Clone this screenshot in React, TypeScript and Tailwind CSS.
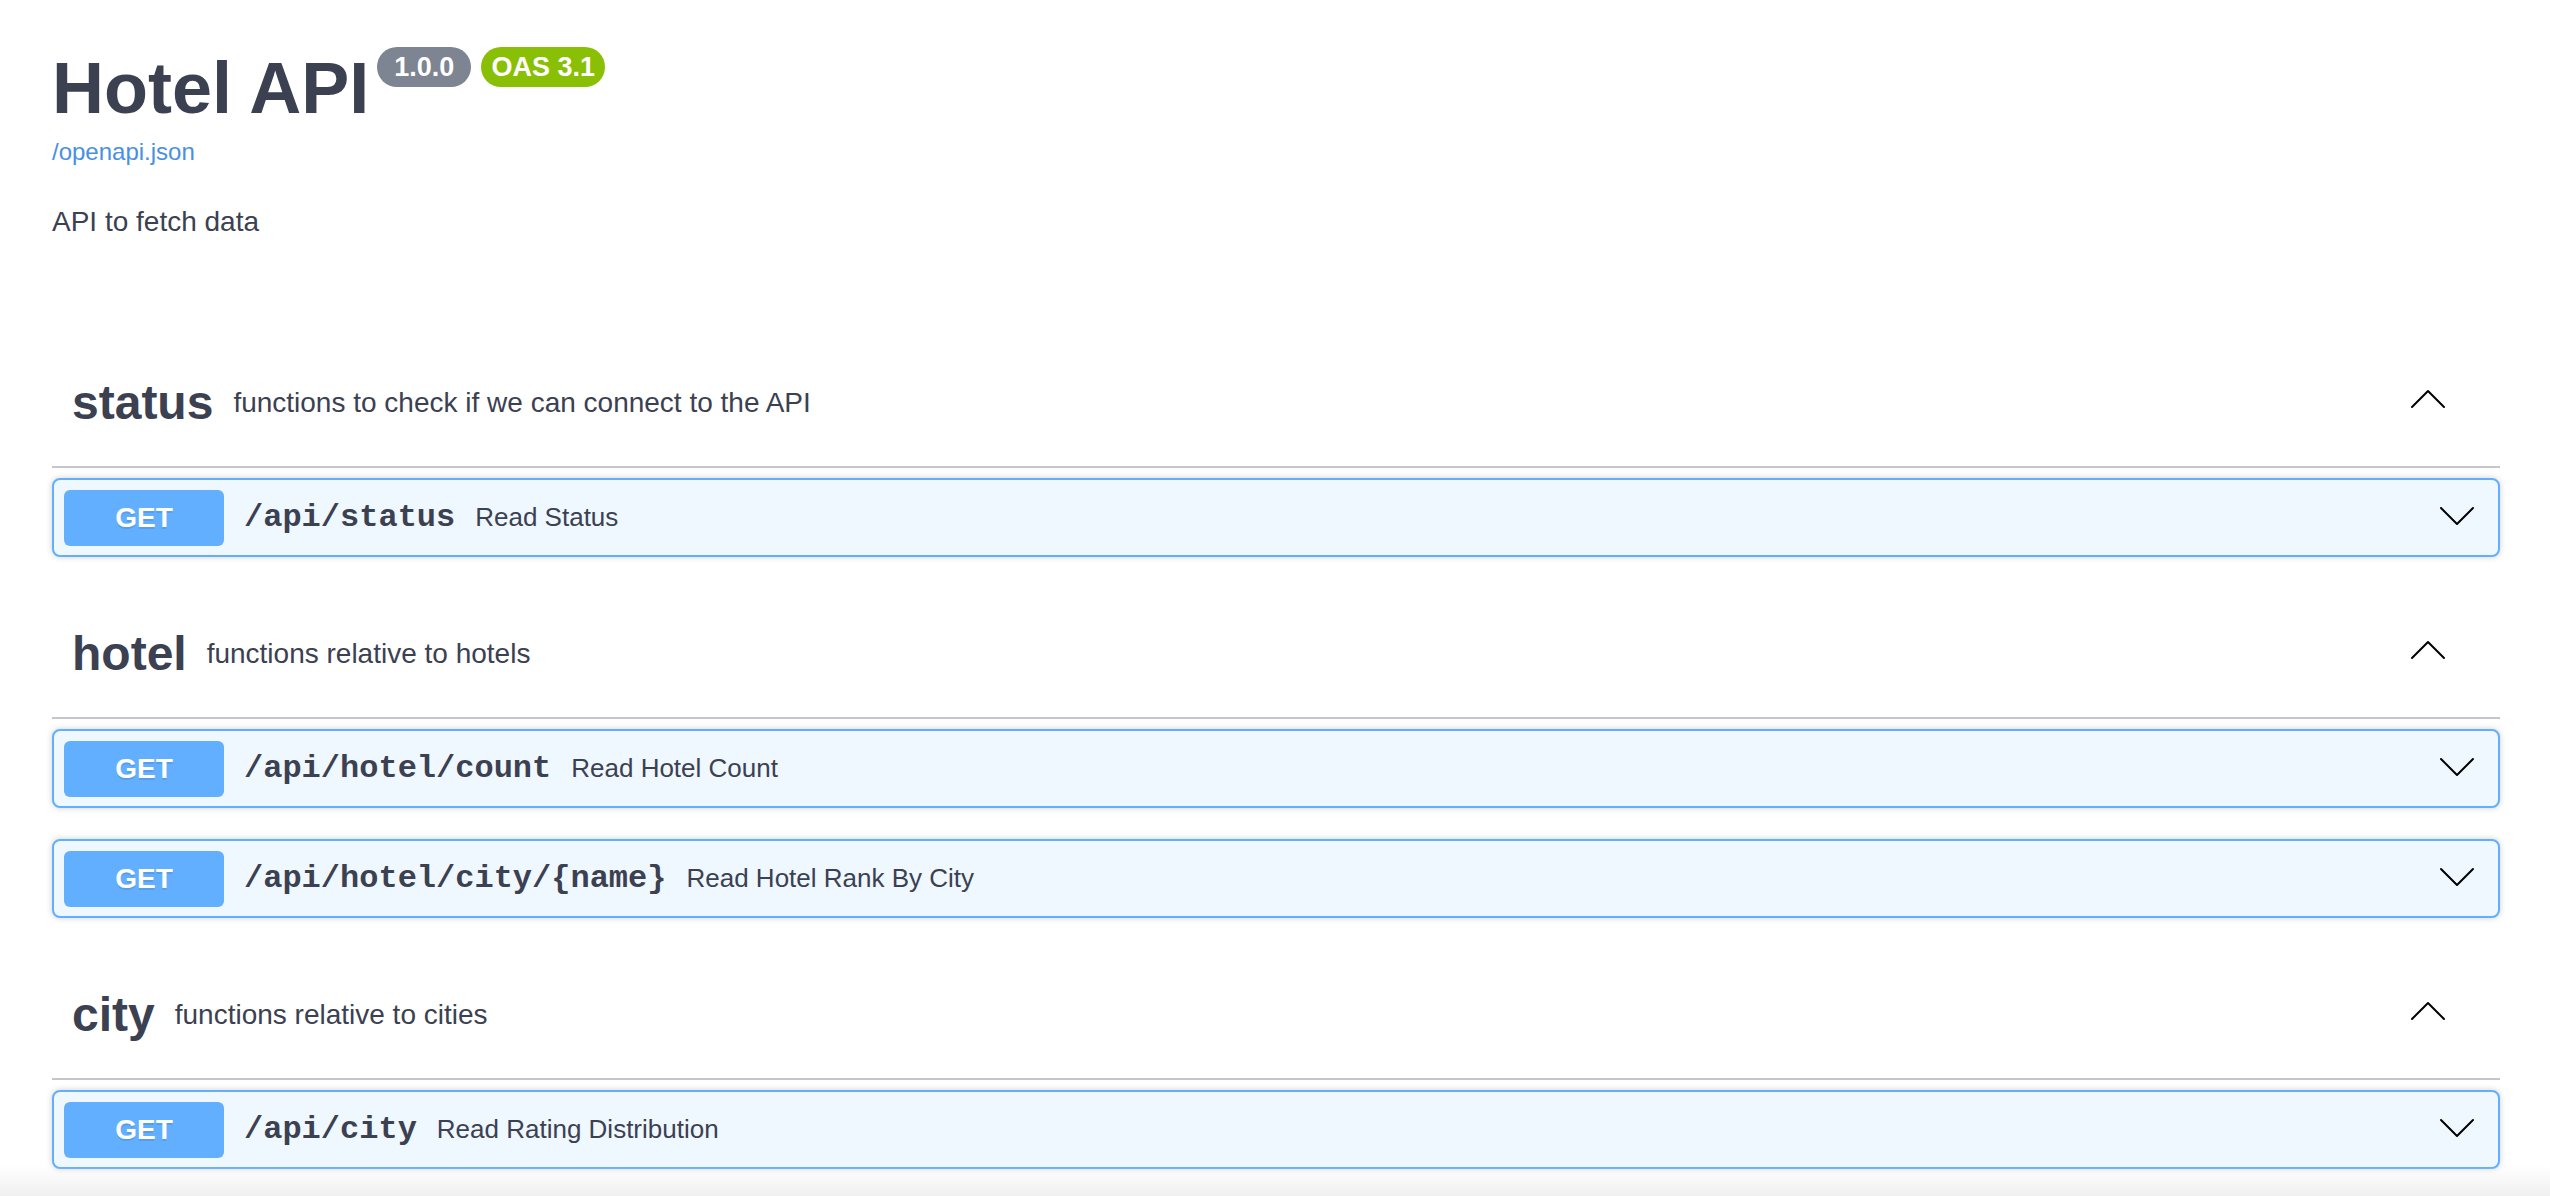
const sections = [
  {
    name: "status",
    desc: "functions to check if we can connect to the API",
    ops: [{ path: "/api/status", summary: "Read Status" }],
  },
  {
    name: "hotel",
    desc: "functions relative to hotels",
    ops: [
      { path: "/api/hotel/count", summary: "Read Hotel Count" },
      { path: "/api/hotel/city/{name}", summary: "Read Hotel Rank By City" },
    ],
  },
  {
    name: "city",
    desc: "functions relative to cities",
    ops: [{ path: "/api/city", summary: "Read Rating Distribution" }],
  },
];

const Chevron = ({ up }: { up?: boolean }) => (
  <svg width="40" height="40" viewBox="0 0 20 20" fill="none" className="shrink-0">
    <polyline
      points={up ? "2,14 10,6 18,14" : "2,6 10,14 18,6"}
      stroke="#000"
      strokeWidth="1"
      strokeLinecap="round"
      strokeLinejoin="round"
    />
  </svg>
);

const Operation = ({ path, summary }: { path: string; summary: string }) => {
  return (
    <div className="mb-[31px] flex h-[79px] items-center rounded-[8px] border-2 border-[#61affe] bg-[#eff7ff] pl-[10px] pr-[21px] shadow-[0_0_6px_rgba(0,0,0,0.19)]">
      <span className="flex h-[56px] w-[160px] shrink-0 items-center justify-center rounded-[6px] bg-[#61affe] text-[28px] font-bold text-white [text-shadow:0_2px_0_rgba(0,0,0,0.1)]">
        GET
      </span>
      <span className="px-[20px] font-['Liberation_Mono','Courier_New',monospace] text-[32px] font-bold text-[#3b4151]">
        {path}
      </span>
      <span className="flex-1 text-[26px] text-[#3b4151]">{summary}</span>
      <div className="mb-[3px]">
        <Chevron />
      </div>
    </div>
  );
};

export default function App() {
  return (
    <div className="relative h-[1196px] overflow-hidden bg-white pl-[52px] pr-[50px] font-['Liberation_Sans',Arial,sans-serif] text-[#3b4151]">
      {/* info block */}
      <div className="pt-[47px]">
        <div className="flex items-start">
          <h1 className="mt-[5px] text-[72px] font-bold leading-none">Hotel API</h1>
          <span className="ml-[8px] flex h-[40px] w-[94px] items-center justify-center rounded-full bg-[#7d8492] text-[27px] font-bold text-white">
            1.0.0
          </span>
          <span className="ml-[10px] flex h-[40px] w-[124px] items-center justify-center rounded-full bg-[#89bf04] text-[27px] font-bold text-white">
            OAS 3.1
          </span>
        </div>
        <a href="#" className="mt-[16px] block text-[24px] leading-none text-[#4990e2]">
          /openapi.json
        </a>
        <p className="mt-[44px] text-[28px] leading-none">API to fetch data</p>
      </div>

      {/* tag sections */}
      <div className="mt-[101px]">
        {sections.map((s) => (
          <div key={s.name}>
            <div className="mb-[10px] flex h-[131px] items-center border-b-2 border-[#c4c6cb] pl-[20px] pr-[52px]">
              <div className="mt-[2px] flex flex-1 items-center">
                <h3 className="text-[48px] font-bold">{s.name}</h3>
                <small className="px-[20px] text-[28px]">{s.desc}</small>
              </div>
              <div className="mb-[6px]">
                <Chevron up />
              </div>
            </div>
            {s.ops.map((op) => (
              <Operation key={op.path} path={op.path} summary={op.summary} />
            ))}
          </div>
        ))}
      </div>

      <div className="pointer-events-none absolute bottom-0 left-0 right-0 h-[30px] bg-linear-to-b from-transparent to-[#f0f0f0]" />
    </div>
  );
}
